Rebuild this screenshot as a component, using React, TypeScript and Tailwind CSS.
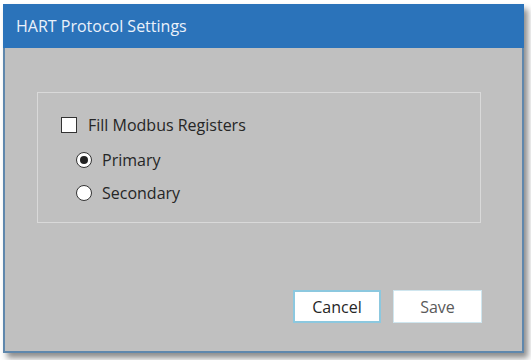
import React from "react";

const font = { fontFamily: '"Open Sans", "Noto Sans", "Liberation Sans", sans-serif' };

function Radio({ checked, label }: { checked: boolean; label: string }) {
  return (
    <label className="flex h-[20px] items-center gap-[10px]">
      <span className="flex h-[16px] w-[16px] items-center justify-center rounded-full border border-[#333] bg-white">
        {checked && <span className="h-[8px] w-[8px] rounded-full bg-[#222]" />}
      </span>
      <span className="text-[16px] leading-[20px] text-[#262626]">{label}</span>
    </label>
  );
}

export default function App() {
  return (
    <div className="h-[360px] w-[531px] bg-white pl-[3px] pt-[4px]" style={font}>
      <div className="flex h-[349px] w-[521px] flex-col shadow-[4px_5px_6px_rgba(0,0,0,0.45)]">
        <div className="flex h-[44px] items-center bg-[#2b73ba] pl-[13px] text-[16px] text-[#eaf1fa]">
          HART Protocol Settings
        </div>
        <div className="flex flex-1 flex-col border-x-2 border-b-2 border-[#5f87ac] bg-[#c0c0c0] pl-[32px] pr-[40px] pt-[44px] pb-[28px]">
          <div className="flex h-[131px] w-[444px] flex-col border border-[#d9d9d9] pl-[23px] pt-[22px]">
            <label className="flex h-[20px] items-center gap-[11px]">
              <span className="h-[16px] w-[16px] border border-[#333] bg-white" />
              <span className="text-[16px] leading-[20px] text-[#262626]">Fill Modbus Registers</span>
            </label>
            <div className="mt-[15px] flex flex-col gap-[13px] pl-[15px]">
              <Radio checked label="Primary" />
              <Radio checked={false} label="Secondary" />
            </div>
          </div>
          <div className="mt-auto flex justify-end gap-[12px]">
            <button className="h-[33px] w-[88px] border-2 border-[#8cc8df] bg-white text-[16px] text-[#262626]">
              Cancel
            </button>
            <button className="h-[33px] w-[89px] border border-[#cfe6ef] bg-white text-[16px] text-[#5a5a5a]">
              Save
            </button>
          </div>
        </div>
      </div>
    </div>
  );
}
